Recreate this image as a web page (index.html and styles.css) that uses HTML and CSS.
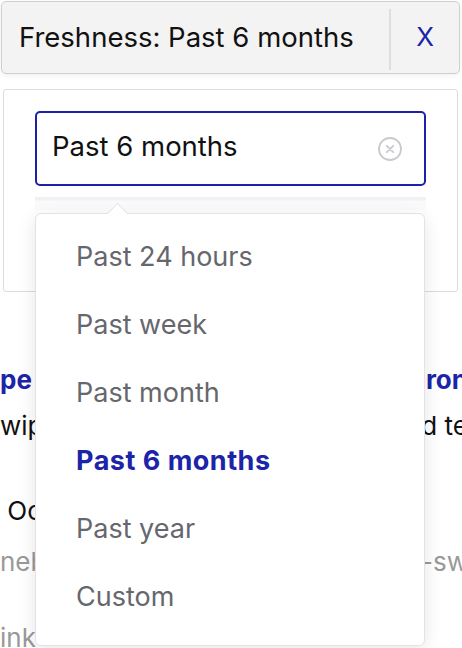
FILE: index.html
```html
<!DOCTYPE html>
<html>
<head>
<meta charset="utf-8">
<link rel="stylesheet" href="styles.css">
</head>
<body>
<div class="filter-bar">
  <span class="filter-label">Freshness: Past 6 months</span>
  <span class="divider"></span>
  <span class="filter-close">X</span>
</div>
<div class="panel">
  <div class="input">
    <span class="input-text">Past 6 months</span>
    <svg class="clear" width="26" height="26" viewBox="0 0 26 26">
      <circle cx="13" cy="13" r="11" fill="none" stroke="#c9cad0" stroke-width="1.8"/>
      <path d="M9.8 9.8 L16.2 16.2 M16.2 9.8 L9.8 16.2" stroke="#c9cad0" stroke-width="1.8" stroke-linecap="round"/>
    </svg>
  </div>
  <div class="band"></div>
</div>
<div class="results">
  <div class="row title"><span>pe</span><span>ron</span></div>
  <div class="row desc"><span>wip</span><span>d te</span></div>
  <div class="row date"><span>&nbsp;Oc</span><span></span></div>
  <div class="row url"><span>neb</span><span>-sw</span></div>
  <div class="row link"><span>ink</span><span></span></div>
</div>
<div class="dropdown">
  <div class="caret"></div>
  <ul class="options">
    <li>Past 24 hours</li>
    <li>Past week</li>
    <li>Past month</li>
    <li class="selected">Past 6 months</li>
    <li>Past year</li>
    <li>Custom</li>
  </ul>
</div>
</body>
</html>
```
FILE: styles.css
```css
html, body {
  margin: 0;
  padding: 0;
  background: #fff;
  overflow: hidden;
}
body {
  width: 462px;
  height: 648px;
  position: relative;
  font-family: Inter, "Noto Sans", sans-serif;
  color: #111;
}
.filter-bar {
  margin: 1px 2px 0 1px;
  height: 71px;
  background: #f3f3f3;
  border: 1px solid #cfcfcf;
  border-radius: 5px;
  display: flex;
  align-items: center;
  box-shadow: 0 2px 6px rgba(0,0,0,0.06);
}
.filter-label {
  flex: 1;
  padding-left: 17px;
  padding-bottom: 2px;
  font-size: 27.5px;
  color: #111;
}
.divider {
  width: 2px;
  align-self: stretch;
  margin: 7px 0 3px;
  background: #dedede;
}
.filter-close {
  width: 68px;
  text-align: center;
  font-size: 26px;
  color: #1c24a8;
  padding-bottom: 2px;
}
.panel {
  margin: 15px 4px 0 3px;
  height: 180px;
  border: 1px solid #dcdcdc;
  border-radius: 3px;
  padding: 21px 31px 0;
}
.input {
  height: 71px;
  border: 2px solid #1c22a8;
  border-radius: 5px;
  display: flex;
  align-items: center;
  padding: 0 21px 0 15px;
}
.input-text {
  flex: 1;
  font-size: 27.5px;
  color: #111;
  padding-bottom: 6px;
}
.clear {
  display: block;
}
.band {
  margin-top: 11px;
  height: 13px;
  background: linear-gradient(#f1f1f5 0, #f1f1f5 3px, #fafafb 4px, #fbfbfc 100%);
}
.results {
  margin-top: 72px;
  font-size: 26px;
}
.row {
  display: flex;
  justify-content: space-between;
  width: 468px;
  white-space: nowrap;
}
.title {
  color: #1c24a8;
  font-weight: 700;
  height: 46px;
}
.desc {
  height: 85px;
}
.date {
  height: 51px;
}
.url {
  color: #999;
  height: 76px;
}
.link {
  color: #999;
}
.dropdown {
  position: absolute;
  left: 35px;
  top: 213px;
  width: 388px;
  height: 431px;
  background: #fff;
  border: 1px solid #e2e2e8;
  border-radius: 6px;
  box-shadow: 0 4px 18px rgba(0,0,0,0.10);
}
.caret {
  position: absolute;
  left: 74px;
  top: -8px;
  width: 14px;
  height: 14px;
  background: #fff;
  border-left: 1px solid #e2e2e8;
  border-top: 1px solid #e2e2e8;
  transform: rotate(45deg);
}
.options {
  list-style: none;
  margin: 0;
  padding: 10px 0 0 40px;
}
.options li {
  height: 68px;
  line-height: 66px;
  font-size: 27px;
  color: #66676d;
}
.options li.selected {
  color: #1c24a8;
  font-weight: 700;
  letter-spacing: 0.5px;
}
```
